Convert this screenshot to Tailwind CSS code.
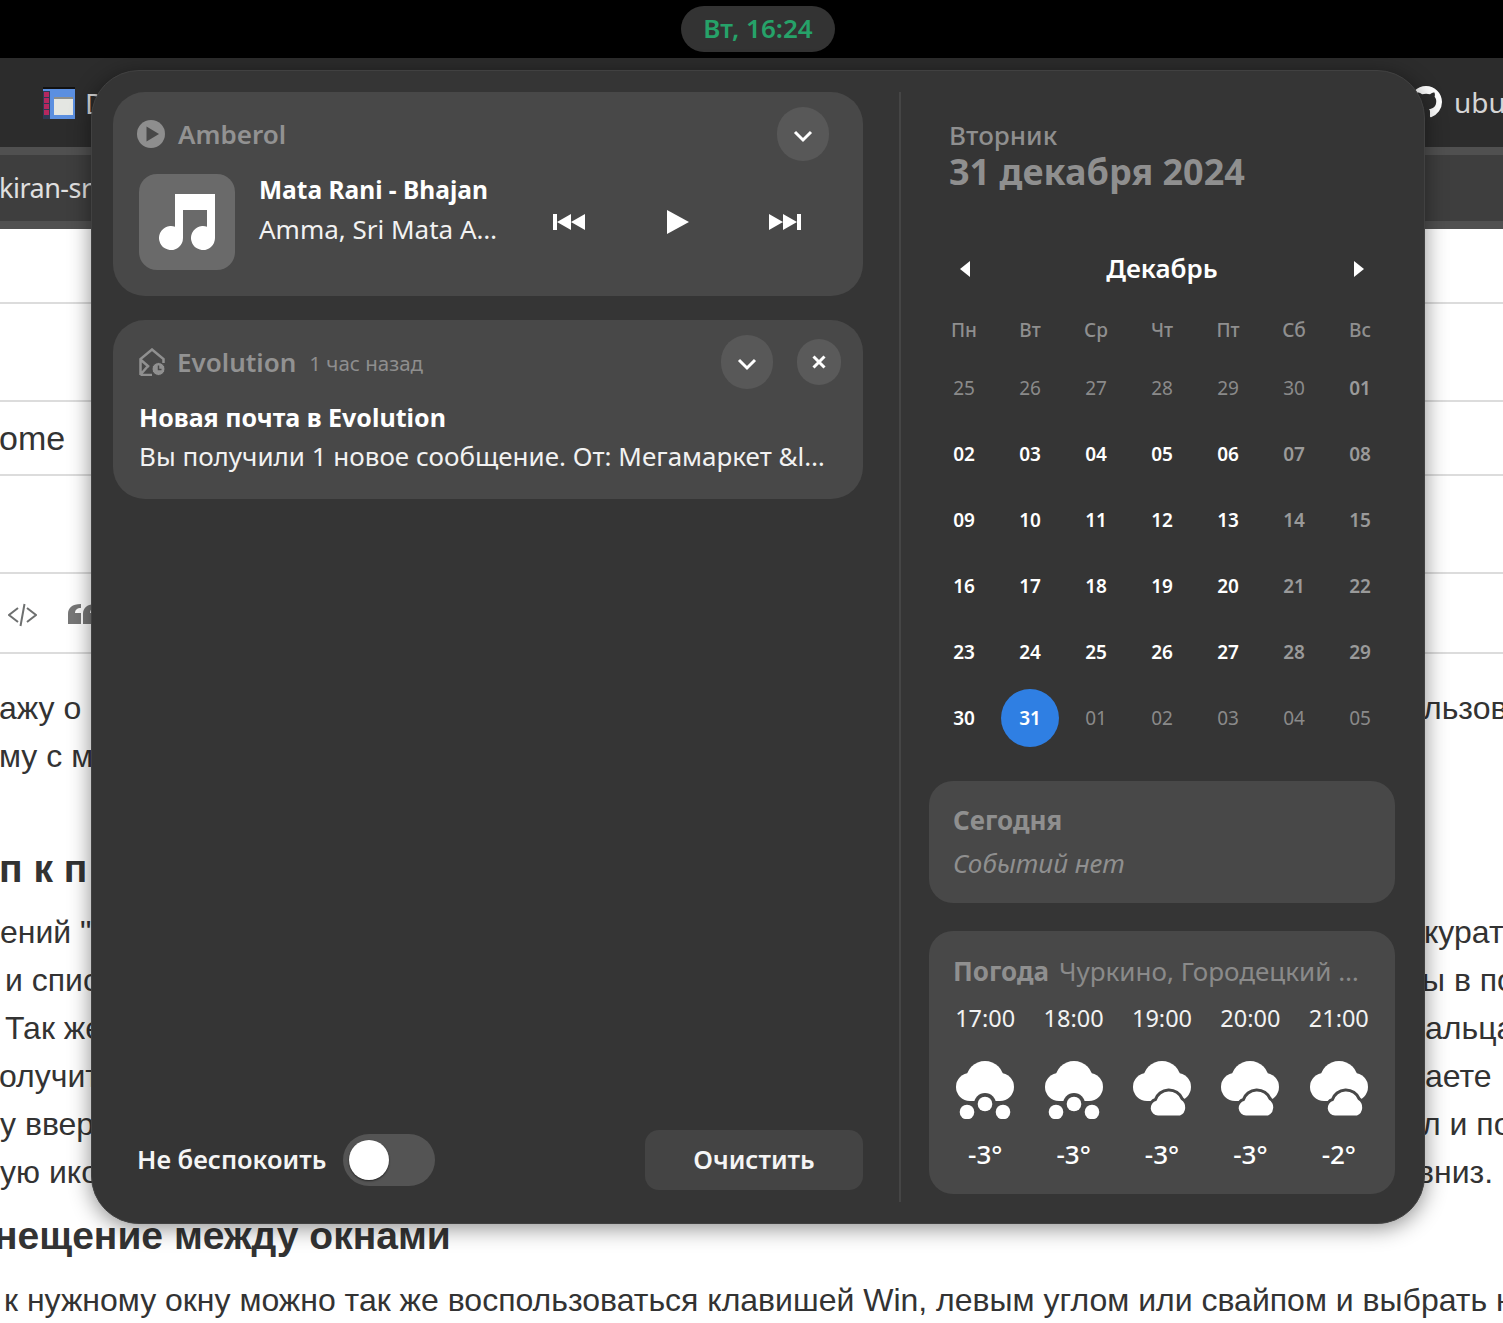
<!DOCTYPE html>
<html lang="ru">
  <head>
    <meta charset="UTF-8" />
    <meta name="viewport" content="width=device-width, initial-scale=1.0" />
    <title>GNOME notifications</title>
    <script src="https://cdn.jsdelivr.net/npm/@tailwindcss/browser@4"></script>
  </head>
  <body class="relative w-[1503px] h-[1323px] overflow-hidden bg-white font-['Noto_Sans',sans-serif]">
    <!-- icon sprites, not display:none or the masks stop working -->
    <svg class="absolute w-0 h-0" width="0" height="0">
      <defs>
        <mask id="cut-snow" maskUnits="userSpaceOnUse" x="0" y="0" width="58" height="58">
          <rect width="58" height="58" fill="white" />
          <circle cx="29" cy="43" r="11" fill="black" />
        </mask>
        <mask id="cut-cloud" maskUnits="userSpaceOnUse" x="0" y="0" width="58" height="58">
          <rect width="58" height="58" fill="white" />
          <path d="M25 54.500a7.500 7.500 0 0 1-1.500-14.800a13 13 0 0 1 24.500-1a9 9 0 0 1-1 15.800z" fill="black" stroke="black" stroke-width="6" />
        </mask>
      </defs>
      <symbol id="i-snow" viewBox="0 0 58 58">
        <g mask="url(#cut-snow)" fill="white">
          <circle cx="29" cy="19" r="19" />
          <circle cx="14" cy="26" r="14" />
          <circle cx="44" cy="26" r="14" />
          <rect x="14" y="22" width="30" height="18" />
        </g>
        <circle cx="29" cy="43" r="7.300" fill="white" />
        <circle cx="11" cy="51" r="7.300" fill="white" />
        <circle cx="47" cy="51" r="7.300" fill="white" />
      </symbol>
      <symbol id="i-cloud" viewBox="0 0 58 58">
        <g mask="url(#cut-cloud)" fill="white">
          <circle cx="29" cy="19" r="19" />
          <circle cx="14" cy="26" r="14" />
          <circle cx="44" cy="26" r="14" />
          <rect x="14" y="22" width="30" height="18" />
        </g>
        <path d="M25 54.500a7.500 7.500 0 0 1-1.500-14.800a13 13 0 0 1 24.500-1a9 9 0 0 1-1 15.800z" fill="white" />
      </symbol>
      <symbol id="i-chevron" viewBox="0 0 20 14">
        <path d="M2 3l8 8l8-8" fill="none" stroke="white" stroke-width="3" />
      </symbol>
    </svg>

    <!-- desktop behind the popup -->
    <div class="flex flex-col h-full">
      <div class="h-[58px] bg-black shrink-0"></div>
      <div class="h-[89px] shrink-0 bg-[#2c2c2c] flex items-center justify-between pl-[43px] overflow-hidden">
        <div class="flex items-center gap-[10px]">
          <svg width="32" height="32" viewBox="0 0 32 32">
            <rect width="32" height="32" fill="#5b8fe0" />
            <rect width="32" height="2" fill="#111" />
            <rect y="4" width="7" height="28" fill="#2d3a55" />
            <rect x="1" y="5" width="5" height="5" fill="#b5285f" />
            <rect x="1" y="11" width="5" height="5" fill="#b5285f" />
            <rect x="1" y="17" width="5" height="5" fill="#b5285f" />
            <rect x="1" y="23" width="5" height="5" fill="#b5285f" />
            <rect x="11" y="10" width="19" height="18" fill="#e4e6e2" />
            <rect x="11" y="10" width="19" height="2" fill="#8d8f8c" />
          </svg>
          <span class="text-[28px] text-[#d5d5d5]">D</span>
        </div>
        <div class="flex items-center gap-3 w-[93px] whitespace-nowrap mb-[1px]">
          <svg class="shrink-0" width="32" height="32" viewBox="0 0 16 16">
            <path fill="white" d="M8 0C3.580 0 0 3.580 0 8c0 3.540 2.290 6.530 5.470 7.590.400.070.550-.170.550-.380 0-.190-.010-.820-.010-1.490-2.010.370-2.530-.490-2.690-.940-.090-.230-.480-.940-.820-1.130-.280-.150-.680-.520-.010-.530.630-.010 1.080.580 1.230.820.720 1.210 1.870.870 2.330.660.070-.520.280-.870.510-1.070-1.780-.200-3.640-.890-3.640-3.950 0-.870.310-1.590.820-2.150-.080-.200-.360-1.020.080-2.120 0 0 .670-.210 2.200.820.640-.180 1.320-.270 2-.270s1.360.090 2 .270c1.530-1.040 2.200-.820 2.200-.820.440 1.100.160 1.920.080 2.120.510.560.820 1.270.820 2.150 0 3.070-1.870 3.750-3.650 3.950.290.250.540.730.540 1.480 0 1.070-.010 1.930-.010 2.200 0 .210.150.460.550.380A8.010 8.010 0 0 0 16 8c0-4.420-3.580-8-8-8z" />
          </svg>
          <span class="text-[28px] text-[#d5d5d5]">ubu</span>
        </div>
      </div>
      <div class="h-[82px] shrink-0 bg-[#3e3e3e] border-y-8 border-[#505050] flex items-center overflow-hidden">
        <span class="text-[27px] tracking-[-0.5px] ml-[-1px] text-[#e0e0e0] whitespace-nowrap">kiran-sr</span>
      </div>
      <div class="h-[75px] shrink-0 border-b-2 border-[#dcdcdc]"></div>
      <div class="h-[98px] shrink-0 border-b-2 border-[#dcdcdc]"></div>
      <div class="h-[74px] shrink-0 border-b-2 border-[#dcdcdc] flex items-center">
        <span class="text-[34px] text-[#333] ml-[-1px] font-['Liberation_Sans',sans-serif]">ome</span>
      </div>
      <div class="h-[98px] shrink-0 border-b-2 border-[#dcdcdc]"></div>
      <div class="h-[80px] shrink-0 border-b-2 border-[#dcdcdc] flex items-center pl-2 gap-[31px]">
        <svg class="mt-[4px]" width="29" height="24" viewBox="0 0 29 24" fill="none" stroke="#6e7070" stroke-width="2">
          <path d="M10 5l-9 7l9 7M19 5l9 7l-9 7M16.500 1l-4 22" />
        </svg>
        <svg class="mt-[2px]" width="30" height="20" viewBox="0 0 30 20" fill="#777">
          <path d="M0 10C0 4 4 0 13 0V4C9 4 7 6 7 9H13V20H0zM15 10C15 4 19 0 28 0V4C24 4 22 6 22 9H28V20H15z" />
        </svg>
      </div>

      <!-- article text, the popup covers its middle -->
      <div class="flex flex-col pt-[30px] text-[32px] leading-[48px] text-[#333] whitespace-nowrap font-['Liberation_Sans',sans-serif]">
        <div class="grid grid-cols-[1425px_78px] overflow-hidden"><span class="ml-[-1px]">ажу о н</span><span class="ml-[-2px]">льзов</span></div>
        <div class="ml-[-1px]">му с м</div>
        <div class="mt-[65px] font-bold text-[39px] leading-[48px] ml-[-1px]">п к п</div>
        <div class="mt-[15px] grid grid-cols-[1425px_78px] overflow-hidden"><span>ений "</span><span class="ml-[-1px]">курат</span></div>
        <div class="grid grid-cols-[1425px_78px] overflow-hidden"><span class="pl-[5px]">и спис</span><span class="ml-[-3px]">ы в по</span></div>
        <div class="grid grid-cols-[1425px_78px] overflow-hidden"><span class="pl-[5px]">Так же</span><span>альца</span></div>
        <div class="grid grid-cols-[1425px_78px] overflow-hidden"><span class="ml-[-1px]">олучит</span><span>аете</span></div>
        <div class="grid grid-cols-[1425px_78px] overflow-hidden"><span>у ввер</span><span class="ml-[-3px]">л и по</span></div>
        <div class="grid grid-cols-[1425px_78px] overflow-hidden"><span>ую ико</span><span class="ml-[-8px]">вниз.</span></div>
        <div class="mt-[16px] font-bold text-[39px] leading-[48px] ml-[-6px]">нещение между окнами</div>
        <div class="mt-[16px] pl-[4px]">к нужному окну можно так же воспользоваться клавишей Win, левым углом или свайпом и выбрать н</div>
      </div>
    </div>

    <!-- clock pill -->
    <div class="absolute left-[681px] top-[6px] w-[154px] h-[46px] pb-[2px] rounded-full bg-[#333333] flex items-center justify-center text-[26px] font-semibold text-[#26a269]">Вт, 16:24</div>

    <!-- calendar / notifications popup -->
    <div class="absolute left-[91px] top-[70px] w-[1334px] h-[1154px] rounded-[48px] bg-[#353535] border border-[#414141] shadow-[0_4px_22px_rgba(0,0,0,0.45)] flex pt-[21px] pb-[21px] pl-[21px] pr-[29px]">
      <!-- left column -->
      <div class="w-[750px] shrink-0 flex flex-col pb-[12px]">
        <!-- player -->
        <div class="h-[204px] rounded-[32px] bg-[#484848] pt-[15px] pl-[24px] pr-[34px]">
          <div class="flex items-center h-[54px]">
            <svg width="28" height="28" viewBox="0 0 28 28">
              <circle cx="14" cy="14" r="14" fill="#8e8e8e" />
              <path d="M9.500 6.500L22 14L9.500 21.500z" fill="#484848" />
            </svg>
            <span class="ml-[13px] text-[26px] font-semibold text-[#929292]">Amberol</span>
            <button class="ml-auto w-[52px] h-[54px] rounded-full bg-[#585858] flex items-center justify-center">
              <svg class="mt-[3px]" width="20" height="14"><use href="#i-chevron" /></svg>
            </button>
          </div>
          <div class="flex items-start mt-[13px] pl-[2px]">
            <div class="w-[96px] h-[96px] rounded-[18px] bg-[#6a6a6a] flex items-center justify-center shrink-0">
              <svg width="56" height="56" viewBox="0 0 56 56">
                <path fill="white" d="M16 0H56V44A12 12 0 1 1 48 32.700V16H24V44A12 12 0 1 1 16 32.700z" />
              </svg>
            </div>
            <div class="ml-[24px] w-[237px] whitespace-nowrap">
              <div class="text-[24.500px] leading-[32px] font-bold text-white">Mata Rani - Bhajan</div>
              <div class="text-[26px] leading-[46px] text-[#f2f2f2]">Amma, Sri Mata A…</div>
            </div>
            <div class="ml-[19px] self-center flex items-center">
              <div class="w-[108px] flex justify-center">
                <svg width="32" height="16" viewBox="0 0 32 16" fill="white"><path d="M0 0h4v16H0zM4 8l14-8v16zM18 8l14-8v16z" /></svg>
              </div>
              <div class="w-[108px] flex justify-center">
                <svg class="ml-[2px]" width="22" height="24" viewBox="0 0 22 24" fill="white"><path d="M0 0l22 12L0 24z" /></svg>
              </div>
              <div class="w-[108px] flex justify-center">
                <svg width="32" height="16" viewBox="0 0 32 16" fill="white"><path d="M28 0h4v16h-4zM28 8L14 0v16zM14 8L0 0v16z" /></svg>
              </div>
            </div>
          </div>
        </div>

        <!-- notification -->
        <div class="h-[179px] mt-[24px] rounded-[32px] bg-[#484848] pt-[15px] pl-[26px] pr-[22px]">
          <div class="flex items-center h-[54px]">
            <svg width="26" height="28" viewBox="0 0 26 28" fill="none" stroke="#909090" stroke-width="2.500">
              <path d="M1.500 27V11L13 1.500L24.500 11V15M1.500 27H13M2 12l8 7M2 26l7-8" />
              <circle cx="19.500" cy="21" r="6.500" fill="#909090" stroke="#484848" stroke-width="1" />
              <path d="M19.500 17.500V21.500H22.500" stroke="#484848" stroke-width="1.500" />
            </svg>
            <span class="ml-[12px] text-[26px] font-semibold text-[#929292]">Evolution</span>
            <span class="ml-[13px] mt-[3px] text-[20.500px] text-[#8e8e8e]">1 час назад</span>
            <button class="ml-auto w-[52px] h-[54px] rounded-full bg-[#585858] flex items-center justify-center">
              <svg class="mt-[3px]" width="20" height="14"><use href="#i-chevron" /></svg>
            </button>
            <button class="ml-[24px] w-[44px] h-[46px] rounded-full bg-[#5a5a5a] flex items-center justify-center">
              <svg width="14" height="14" viewBox="0 0 14 14"><path d="M1.500 1.500l11 11M12.500 1.500l-11 11" fill="none" stroke="white" stroke-width="3" /></svg>
            </button>
          </div>
          <div class="mt-[9px] whitespace-nowrap">
            <div class="text-[25px] leading-[38px] font-bold text-white">Новая почта в Evolution</div>
            <div class="text-[26px] leading-[40px] text-[#f2f2f2]">Вы получили 1 новое сообщение. От: Мегамаркет &amp;l…</div>
          </div>
        </div>

        <!-- bottom controls -->
        <div class="mt-auto flex items-center pl-[24px] h-[60px]">
          <span class="text-[25.500px] font-semibold text-[#f5f5f5] mb-[2px]">Не беспокоить</span>
          <div class="ml-[17px] w-[92px] h-[52px] rounded-full bg-[#545454] flex items-center pl-[6px]">
            <div class="w-[40px] h-[40px] rounded-full bg-white shadow-[0_1px_2px_rgba(0,0,0,0.6)]"></div>
          </div>
          <button class="ml-auto w-[218px] h-[60px] pb-[2px] rounded-[14px] bg-[#444444] text-[25.500px] font-semibold text-[#f5f5f5]">Очистить</button>
        </div>
      </div>

      <!-- separator -->
      <div class="ml-[36px] w-[2px] bg-[#454545] shrink-0"></div>

      <!-- right column -->
      <div class="ml-[28px] w-[466px] shrink-0 flex flex-col">
        <div class="pl-[20px] pt-[24px]">
          <div class="text-[26px] leading-[38px] font-medium text-[#8f8f8f]">Вторник</div>
          <div class="text-[36px] leading-[36px] font-bold text-[#8f8f8f] whitespace-nowrap">31 декабря 2024</div>
        </div>

        <div class="mt-[61px] flex items-center justify-between h-[36px] pl-[31px] pr-[31px]">
          <svg width="10" height="16" viewBox="0 0 10 16" fill="white"><path d="M10 0L0 8l10 8z" /></svg>
          <span class="text-[26px] font-semibold text-white mb-[2px]">Декабрь</span>
          <svg width="10" height="16" viewBox="0 0 10 16" fill="white"><path d="M0 0l10 8L0 16z" /></svg>
        </div>

        <div class="mt-[18px] ml-[2px] grid grid-cols-[repeat(7,66px)] grid-rows-[50px_repeat(6,66px)] text-[19px] items-center justify-items-center">
          <span class="font-medium text-[#8f8f8f]">Пн</span><span class="font-medium text-[#8f8f8f]">Вт</span><span class="font-medium text-[#8f8f8f]">Ср</span><span class="font-medium text-[#8f8f8f]">Чт</span><span class="font-medium text-[#8f8f8f]">Пт</span><span class="font-medium text-[#8f8f8f]">Сб</span><span class="font-medium text-[#8f8f8f]">Вс</span>
          <span class="text-[#8a8a8a]">25</span><span class="text-[#8a8a8a]">26</span><span class="text-[#8a8a8a]">27</span><span class="text-[#8a8a8a]">28</span><span class="text-[#8a8a8a]">29</span><span class="text-[#8a8a8a]">30</span><span class="font-semibold text-[#9a9a9a]">01</span>
          <span class="font-semibold text-white">02</span><span class="font-semibold text-white">03</span><span class="font-semibold text-white">04</span><span class="font-semibold text-white">05</span><span class="font-semibold text-white">06</span><span class="font-semibold text-[#9a9a9a]">07</span><span class="font-semibold text-[#9a9a9a]">08</span>
          <span class="font-semibold text-white">09</span><span class="font-semibold text-white">10</span><span class="font-semibold text-white">11</span><span class="font-semibold text-white">12</span><span class="font-semibold text-white">13</span><span class="font-semibold text-[#9a9a9a]">14</span><span class="font-semibold text-[#9a9a9a]">15</span>
          <span class="font-semibold text-white">16</span><span class="font-semibold text-white">17</span><span class="font-semibold text-white">18</span><span class="font-semibold text-white">19</span><span class="font-semibold text-white">20</span><span class="font-semibold text-[#9a9a9a]">21</span><span class="font-semibold text-[#9a9a9a]">22</span>
          <span class="font-semibold text-white">23</span><span class="font-semibold text-white">24</span><span class="font-semibold text-white">25</span><span class="font-semibold text-white">26</span><span class="font-semibold text-white">27</span><span class="font-semibold text-[#9a9a9a]">28</span><span class="font-semibold text-[#9a9a9a]">29</span>
          <span class="font-semibold text-white">30</span><span class="w-[58px] h-[58px] rounded-full bg-[#2f7fe3] flex items-center justify-center font-semibold text-white">31</span><span class="text-[#8a8a8a]">01</span><span class="text-[#8a8a8a]">02</span><span class="text-[#8a8a8a]">03</span><span class="text-[#8a8a8a]">04</span><span class="text-[#8a8a8a]">05</span>
        </div>

        <!-- today -->
        <div class="mt-[30px] h-[122px] rounded-[24px] bg-[#484848] pl-[24px] pt-[20px]">
          <div class="text-[26px] leading-[38px] font-bold text-[#8f8f8f]">Сегодня</div>
          <div class="text-[26px] leading-[48px] italic text-[#8f8f8f]">Событий нет</div>
        </div>

        <!-- weather -->
        <div class="mt-[28px] h-[263px] rounded-[24px] bg-[#484848] pt-[21px]">
          <div class="flex items-center pl-[24px] gap-[10px] h-[38px] whitespace-nowrap">
            <span class="text-[26px] font-bold text-[#8f8f8f]">Погода</span>
            <span class="text-[26px] text-[#8a8a8a]">Чуркино, Городецкий …</span>
          </div>
          <div class="mt-[9px] px-[12px] grid grid-cols-5 justify-items-center">
            <div class="flex flex-col items-center"><span class="text-[23.500px] leading-[38px] text-[#f2f2f2]">17:00</span><svg class="mt-[24px]" width="58" height="58"><use href="#i-snow" /></svg><span class="mt-[16px] text-[26px] leading-[38px] font-medium text-white">-3°</span></div>
            <div class="flex flex-col items-center"><span class="text-[23.500px] leading-[38px] text-[#f2f2f2]">18:00</span><svg class="mt-[24px]" width="58" height="58"><use href="#i-snow" /></svg><span class="mt-[16px] text-[26px] leading-[38px] font-medium text-white">-3°</span></div>
            <div class="flex flex-col items-center"><span class="text-[23.500px] leading-[38px] text-[#f2f2f2]">19:00</span><svg class="mt-[24px]" width="58" height="58"><use href="#i-cloud" /></svg><span class="mt-[16px] text-[26px] leading-[38px] font-medium text-white">-3°</span></div>
            <div class="flex flex-col items-center"><span class="text-[23.500px] leading-[38px] text-[#f2f2f2]">20:00</span><svg class="mt-[24px]" width="58" height="58"><use href="#i-cloud" /></svg><span class="mt-[16px] text-[26px] leading-[38px] font-medium text-white">-3°</span></div>
            <div class="flex flex-col items-center"><span class="text-[23.500px] leading-[38px] text-[#f2f2f2]">21:00</span><svg class="mt-[24px]" width="58" height="58"><use href="#i-cloud" /></svg><span class="mt-[16px] text-[26px] leading-[38px] font-medium text-white">-2°</span></div>
          </div>
        </div>
      </div>
    </div>
  </body>
</html>
